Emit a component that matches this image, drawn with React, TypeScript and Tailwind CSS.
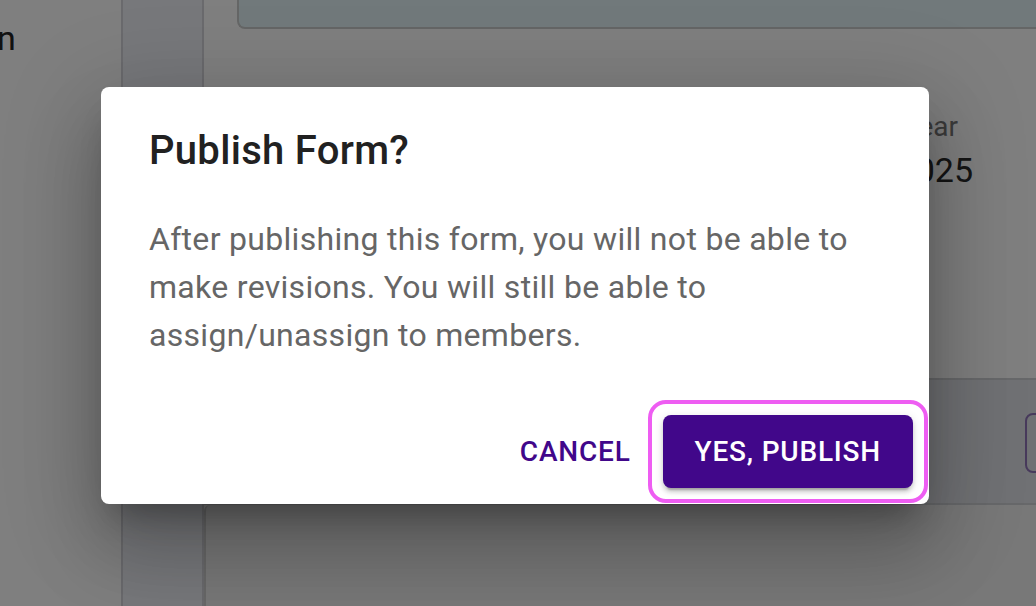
import React from "react";

export default function App() {
  return (
    <div
      className="relative w-[1036px] h-[606px] overflow-hidden bg-white"
      style={{ fontFamily: "Roboto, 'Noto Sans', sans-serif" }}
    >
      {/* Page behind the dialog */}
      <div className="flex h-full w-full">
        <div className="w-[121px] shrink-0 pt-[18px] overflow-hidden">
          <div className="-ml-[3px] text-[34px] leading-[40px] text-[#222]">n</div>
        </div>
        <div className="w-[83px] shrink-0 bg-[#eef0f7] border-x-2 border-[#d4d5da]" />
        <div className="flex flex-1 flex-col">
          <div className="ml-[33px] h-[29px] shrink-0 rounded-bl-[8px] bg-[#e2f3f6] border-l-2 border-b-2 border-[#cacccd]" />
          <div className="flex h-[349px] shrink-0 justify-end pr-[63px] pt-[78px]">
            <div className="flex flex-col">
              <div className="ml-[6px] text-[28px] leading-[40px] text-[#777]">Year</div>
              <div className="text-[34px] leading-[46px] text-[#2a2a2a]">2025</div>
            </div>
          </div>
          <div className="flex h-[127px] shrink-0 items-center justify-end border-y-2 border-[#cfd0d4] bg-[#e0e2e8] pt-[2px]">
            <div className="-mr-[69px] h-[60px] w-[80px] rounded-[8px] border-2 border-[#9074b9]" />
          </div>
          <div className="flex-1 rounded-tl-[6px] border-l-2 border-[#d0d0d0] bg-[#f0f0f0]" />
        </div>
      </div>

      {/* Backdrop */}
      <div className="absolute inset-0 bg-black/50" />

      {/* Dialog */}
      <div className="absolute inset-0 pl-[101px] pt-[87px]">
        <div className="w-[828px] rounded-[8px] bg-white shadow-[0_22px_30px_-14px_rgba(0,0,0,0.3),0_48px_76px_6px_rgba(0,0,0,0.16),0_18px_92px_16px_rgba(0,0,0,0.14)]">
          <h2 className="px-[48px] py-[32px] text-[40px] font-medium leading-[64px] tracking-[0.3px] text-[#212121]">
            Publish Form?
          </h2>
          <div className="px-[48px] pb-[40px]">
            <p className="text-[32px] leading-[48px] tracking-[0.3px] text-[#666666]">
              After publishing this form, you will not be able to make revisions. You will still be able to assign/unassign to members.
            </p>
          </div>
          <div className="flex items-center justify-end gap-[16px] p-[16px]">
            <button className="rounded-[8px] px-[16px] py-[12px] text-[28px] font-medium uppercase leading-[49px] tracking-[0.8px] text-[#41078a]">
              Cancel
            </button>
            <div className="relative">
              <span className="pointer-events-none absolute -inset-[15px] rounded-[18px] border-[4px] border-[#ee5df2]" />
              <button className="relative rounded-[8px] bg-[#41078a] px-[32px] py-[12px] text-[28px] font-medium uppercase leading-[49px] tracking-[0.8px] text-white shadow-[0_6px_2px_-4px_rgba(0,0,0,0.2),0_4px_4px_0_rgba(0,0,0,0.14),0_2px_10px_0_rgba(0,0,0,0.12)]">
                Yes, Publish
              </button>
            </div>
          </div>
        </div>
      </div>
    </div>
  );
}
